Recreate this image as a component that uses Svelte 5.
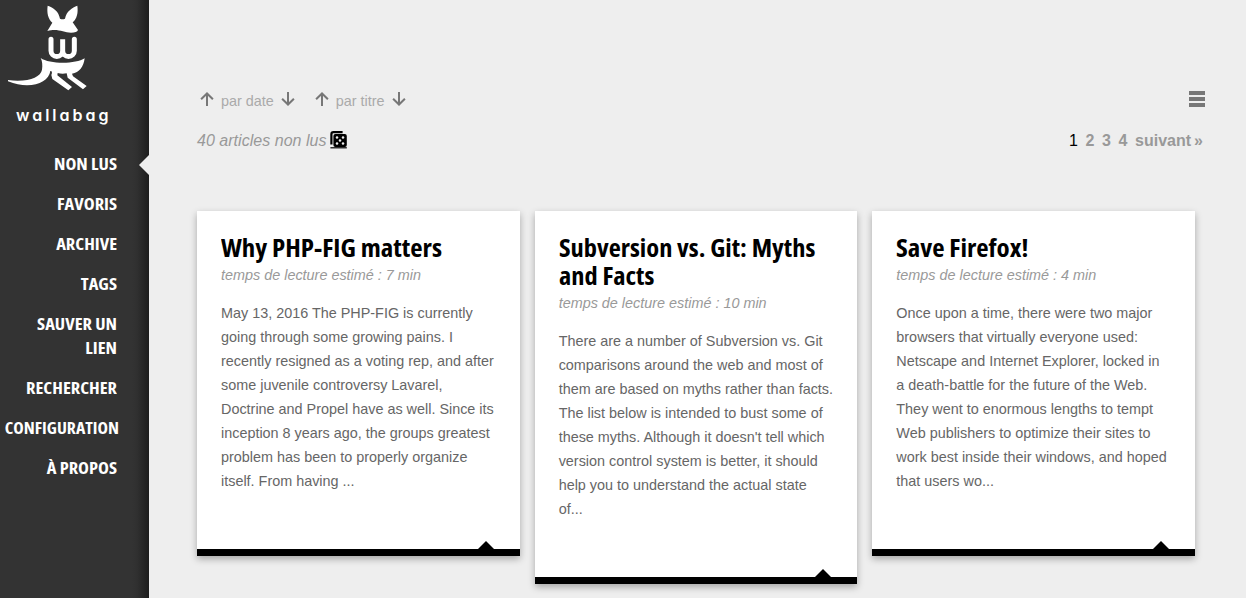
<script>
  const nav = [
    { lines: ['Non lus'], current: true },
    { lines: ['Favoris'] },
    { lines: ['Archive'] },
    { lines: ['Tags'] },
    { lines: ['Sauver un', 'lien'] },
    { lines: ['Rechercher'] },
    { lines: ['Configuration'], wide: true },
    { lines: ['À propos'] },
  ];
  const cards = [
    {
      title: ['Why PHP-FIG matters'],
      minutes: 7,
      text: ['May 13, 2016 The PHP-FIG is currently', 'going through some growing pains. I', 'recently resigned as a voting rep, and after', 'some juvenile controversy Lavarel,', 'Doctrine and Propel have as well. Since its', 'inception 8 years ago, the groups greatest', 'problem has been to properly organize', 'itself. From having ...'],
    },
    {
      title: ['Subversion vs. Git: Myths', 'and Facts'],
      minutes: 10,
      text: ['There are a number of Subversion vs. Git', 'comparisons around the web and most of', 'them are based on myths rather than facts.', 'The list below is intended to bust some of', "these myths. Although it doesn't tell which", 'version control system is better, it should', 'help you to understand the actual state', 'of...'],
    },
    {
      title: ['Save Firefox!'],
      minutes: 4,
      text: ['Once upon a time, there were two major', 'browsers that virtually everyone used:', 'Netscape and Internet Explorer, locked in', 'a death-battle for the future of the Web.', 'They went to enormous lengths to tempt', 'Web publishers to optimize their sites to', 'work best inside their windows, and hoped', 'that users wo...'],
    },
  ];
  const sorts = ['par date', 'par titre'];
</script>

{#snippet arrow(down)}
  <svg class="arrow" class:down width="14" height="14" viewBox="0 0 14 14">
    <path d="M7 14V1.6M1.1 7.2 7 1.5l5.9 5.7" fill="none" stroke="#777" stroke-width="2" />
  </svg>
{/snippet}

<div class="page">
  <aside>
    <svg class="logo" width="149" height="100" viewBox="0 0 447 300" fill="#fff">
      <path d="M143 17C160 22 176 34 180 56Q187 60 195 56C199 34 217 22 232 17C235 38 231 56 218 67L234 90Q231 98 213 98C190 98 174 84 142 93L157 68C144 57 140 38 143 17Z" />
      <path d="M153 118V152a17.5 17.5 0 0 0 35 0V118V152a17.5 17.5 0 0 0 35 0V118" fill="none" stroke="#fff" stroke-width="15" stroke-linecap="round" />
      <path d="M122 174C148 193 227 193 254 175C251 200 238 218 216 221L219 229L260 258L249 268L203 233L200 220Q186 223 173 219L172 226L216 261L205 271L157 237L154 225C158 216 155 212 151 213C146 250 88 270 24 244V240C82 248 122 232 126 209C128 196 127 184 122 174Z" />
    </svg>
    <div class="wordmark">wallabag</div>
    <nav>
      {#each nav as item}
        <a class:wide={item.wide} class:current={item.current}>
          {#each item.lines as line}<span>{line}</span>{/each}
        </a>
      {/each}
    </nav>
  </aside>

  <main>
    <div class="tools">
      {#each sorts as label}
        <div class="sort">{@render arrow(false)}<span>{label}</span>{@render arrow(true)}</div>
      {/each}
      <div class="list-mode"><i></i><i></i><i></i></div>
    </div>

    <div class="results">
      <em>40 articles non lus</em>
      <svg width="17" height="18" viewBox="0 0 17 18">
        <path d="M1.4 13.5V3.2Q1.4 1.2 3.4 1.2H12.6" fill="none" stroke="#000" stroke-width="2.2" />
        <rect x="3.4" y="3" width="13.4" height="13" rx="2" />
        <path d="M.4 16.8H16.8" stroke="#000" stroke-width="1.2" />
        <g fill="#eee"><circle cx="7" cy="6.5" r="1.25" /><circle cx="13" cy="6.5" r="1.25" /><circle cx="10" cy="9.5" r="1.25" /><circle cx="7" cy="12.5" r="1.25" /><circle cx="13" cy="12.5" r="1.25" /></g>
      </svg>
      <div class="pages"><b class="on">1</b><b>2</b><b>3</b><b>4</b><b>suivant</b><b class="next">»</b></div>
    </div>

    <section>
      {#each cards as card}
        <article>
          <h2 class:long={card.title.length > 1}>{#each card.title as line}<span>{line}</span>{/each}</h2>
          <div class="meta">temps de lecture estimé : {card.minutes} min</div>
          <p>{#each card.text as line}<span>{line}</span>{/each}</p>
          <div class="bar"></div>
        </article>
      {/each}
    </section>
  </main>
</div>

<style>
  :global(body) { margin: 0; background: #eee; overflow: hidden; }
  .page { display: flex; height: 598px; overflow: hidden; background: #eee; font-family: "Liberation Sans", Arial, sans-serif; }
  aside { width: 149px; flex: none; box-sizing: border-box; background: linear-gradient(to left, #1d1d1d, #252525 5px, #303030 12px, #333 17px); }
  .logo { display: block; }
  .wordmark { height: 30px; margin-left: 16px; font: 600 16px/30px Inter, sans-serif; font-feature-settings: "cv11"; letter-spacing: 3px; color: #fff; white-space: nowrap; }
  nav { display: flex; flex-direction: column; gap: 16px; padding: 22px 32px 0 0; }
  nav a { position: relative; font: 700 15.6px/24px "Open Sans", sans-serif; font-stretch: 75%; text-transform: uppercase; color: #fff; text-align: right; white-space: nowrap; }
  nav span { transform: scaleX(1.18); transform-origin: right; }
  nav a.wide { margin-right: -2px; }
  nav a.wide span { transform: scaleX(1.135); }
  nav a.current::after { content: ""; position: absolute; right: -32px; top: 3px; border: solid transparent; border-width: 10px 10px 10px 0; border-right-color: #eee; }
  nav span, h2 span, p span { display: block; white-space: nowrap; }
  main { flex: 1; padding: 88px 51px 0 48px; }
  .tools { display: flex; align-items: center; height: 24px; padding: 0 0 0 3px; }
  .sort { display: flex; align-items: center; height: 24px; margin-right: 20px; font-size: 14.4px; color: #aaa; }
  .sort span { margin: 2px 7px 0; }
  .arrow { margin-top: -2px; }
  .arrow.down { transform: rotate(180deg); }
  .list-mode { margin: -2px -10px 0 auto; width: 16px; display: grid; gap: 2px; }
  .list-mode i { height: 4px; background: #777; }
  .results { display: flex; align-items: center; height: 24px; margin-top: 16px; font-size: 16px; color: #999; }
  .results em { margin: 1px 3px 0 0; letter-spacing: .03px; }
  .results svg { margin-top: -1px; }
  .pages { display: flex; margin: 1px -8px 0 auto; }
  .pages b { margin-left: 7.6px; }
  .pages .on { color: #000; font-weight: 400; }
  .pages .next { margin-left: 3px; }
  section { display: grid; grid-template-columns: repeat(3, 1fr); align-items: start; gap: 15px; margin-top: 59px; }
  article { background: #fff; padding-top: 23px; box-shadow: 0 3px 7px rgba(0, 0, 0, .3); }
  h2 { margin: 0 24px; font: 700 24px/28px "Open Sans", sans-serif; font-stretch: 75%; color: #000; }
  h2 span { transform: scaleX(1.12); transform-origin: left; }
  h2.long span { transform: scaleX(1.1); }
  .meta { margin: 1px 24px 0; font-size: 14.4px; line-height: 24px; font-style: italic; color: #999; white-space: nowrap; }
  p { margin: 14px 24px 56px; font-size: 14.4px; line-height: 24px; color: #666; }
  .bar { position: relative; height: 7px; background: #000; }
  .bar::before { content: ""; position: absolute; right: 26px; bottom: 7px; border: solid transparent; border-width: 0 8px 8px; border-bottom-color: #000; }
</style>
